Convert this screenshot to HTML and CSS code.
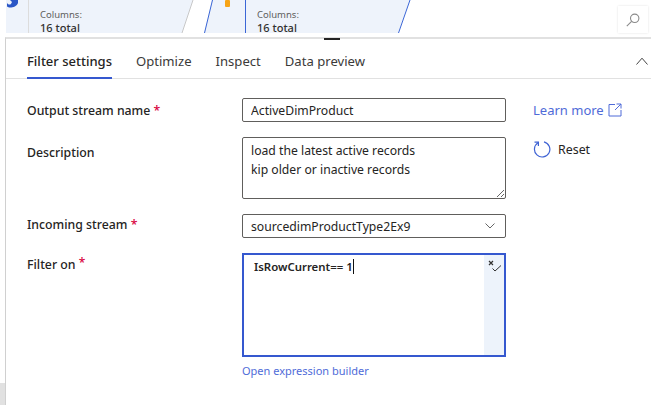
FILE: index.html
```html
<!DOCTYPE html>
<html lang="en">
  <head>
    <meta charset="UTF-8" />
    <meta name="viewport" content="width=device-width, initial-scale=1" />
    <title>Filter settings</title>
    <link rel="stylesheet" href="styles.css">
  </head>
  <body>
    <div class="canvas">
      <svg class="flow" width="651" height="33" viewBox="0 0 651 33">
        <polygon points="6,0 193,0 182,33 6,33" fill="#eef3fb" />
        <line x1="28.5" y1="0" x2="28.5" y2="33" stroke="#dcdcdc" />
        <line x1="193" y1="0" x2="182" y2="33" stroke="#c8c8c8" />
        <polygon points="212,0 410,0 398,33 204,33" fill="#eef3fb" />
        <line x1="212.5" y1="0" x2="204.5" y2="33" stroke="#3b66d6" />
        <line x1="245.5" y1="0" x2="245.5" y2="33" stroke="#3b66d6" />
        <line x1="410" y1="0" x2="398.5" y2="33" stroke="#3b66d6" />
        <path d="M7 3 C9 5.5 11 5 12 2 L10 0 L18 0 L18 3 C17 6.5 12 8 9 7.5 L7 6.5 Z" fill="#2a56c6" />
        <rect x="225" y="0" width="5" height="7" rx="1" fill="#f7a416" />
      </svg>
      <div class="node node-a">
        <span class="node-key">Columns:</span>
        <span class="node-val">16 total</span>
      </div>
      <div class="node node-b">
        <span class="node-key">Columns:</span>
        <span class="node-val">16 total</span>
      </div>
      <button class="search-btn" aria-label="Search">
        <svg width="14" height="14" viewBox="0 0 14 14" fill="none" stroke="#8a8a8a" stroke-width="1.1">
          <circle cx="8.7" cy="5.3" r="4.2" />
          <line x1="5.6" y1="8.4" x2="0.8" y2="13.2" />
        </svg>
      </button>
    </div>

    <main class="panel">
      <span class="grip"></span>
      <nav class="tabs">
        <a class="tab tab-active">Filter settings</a>
        <a class="tab">Optimize</a>
        <a class="tab">Inspect</a>
        <a class="tab">Data preview</a>
        <svg class="collapse" width="12" height="8" viewBox="0 0 12 8" fill="none" stroke="#444" stroke-width="1">
          <path d="M0.5 7.5 L6 1.2 L11.5 7.5" />
        </svg>
      </nav>

      <div class="settings">
        <form class="form">
          <label class="label label-name">Output stream name <span class="req">*</span></label>
          <input class="field field-text" value="ActiveDimProduct" />

          <label class="label label-desc">Description</label>
          <textarea class="field field-area">load the latest active records
kip older or inactive records</textarea>

          <label class="label">Incoming stream <span class="req">*</span></label>
          <div class="field field-select">
            <span>sourcedimProductType2Ex9</span>
            <svg width="10" height="6" viewBox="0 0 10 6" fill="none" stroke="#666" stroke-width="1">
              <path d="M0.5 0.5 L5 5 L9.5 0.5" />
            </svg>
          </div>

          <label class="label label-filter">Filter on <span class="req sup">*</span></label>
          <div class="expr-wrap">
            <div class="expr">
              <div class="expr-code">IsRowCurrent== 1<span class="caret"></span></div>
              <div class="expr-side">
                <svg width="13" height="12" viewBox="0 0 13 12" fill="none" stroke="#333">
                  <path d="M1 1 L5 5 M5 1 L1 5" stroke-width="1.2" />
                  <path d="M4.5 8.5 L7 11 L13 5.5" stroke-width="1" />
                </svg>
              </div>
            </div>
            <a class="expr-link">Open expression builder</a>
          </div>
        </form>

        <aside class="actions">
          <a class="learn">Learn more
            <svg width="14" height="14" viewBox="0 0 14 14" fill="none" stroke="#4f6bd8" stroke-width="1">
              <path d="M7 1.5 H1 V13 H13 V7" />
              <path d="M8.5 1 H13 V5.5 M13 1 L7 7" />
            </svg>
          </a>
          <a class="reset">
            <svg width="18" height="18" viewBox="0 0 18 18" fill="none" stroke="#3f63d4" stroke-width="1.2">
              <path d="M5 2.8 A7.7 7.7 0 1 0 11 1.8" />
              <path d="M1.5 2.2 H5.4 V6" />
            </svg>
            Reset
          </a>
        </aside>
      </div>
    </main>

    <div class="corner"></div>
  </body>
</html>
```

FILE: styles.css
```css
html,
body {
  height: 100%;
}
body {
  font-family: "Noto Sans", "Open Sans", Arial, sans-serif;
  background: #fff;
  color: #252423;
  margin: 0;
  padding: 0;
  overflow: hidden;
  position: relative;
}

/* data flow strip at the top */
.canvas {
  position: relative;
  height: 37px;
}
.flow {
  position: absolute;
  left: 0;
  top: 0;
}
.node {
  position: absolute;
  top: 8px;
  display: flex;
  flex-direction: column;
}
.node-a {
  left: 40px;
}
.node-b {
  left: 257px;
}
.node-key {
  font-size: 9.5px;
  line-height: 13px;
  color: #605e5c;
}
.node-val {
  font-size: 11px;
  line-height: 14px;
  font-weight: 500;
  color: #323130;
}
.search-btn {
  position: absolute;
  left: 618px;
  top: 6px;
  width: 30px;
  height: 27px;
  padding: 0;
  border: 0;
  background: #fff;
  box-shadow: 0 0 2px rgba(0, 0, 0, 0.12);
  display: flex;
  align-items: center;
  justify-content: center;
}

/* bottom panel */
.panel {
  position: relative;
  margin-left: 5px;
  border-left: 1px solid #d0d0d0;
  border-top: 2px solid #e1e1e1;
  height: 366px;
}
.grip {
  position: absolute;
  left: 318px;
  top: -1px;
  width: 16px;
  height: 2px;
  background: #252423;
}
.tabs {
  display: flex;
  align-items: center;
  gap: 24px;
  height: 39px;
  padding-left: 21px;
  border-bottom: 1px solid #e1e1e1;
  font-size: 13.1px;
  position: relative;
}
.tab {
  line-height: 33px;
  padding-top: 6px;
  height: 39px;
  box-sizing: border-box;
  color: #3b3a39;
}
.tab-active {
  font-size: 13px;
  font-weight: 500;
  color: #252423;
  border-bottom: 2px solid #3558cf;
  height: 40px;
}
.collapse {
  position: absolute;
  right: 3px;
  top: 18px;
}
.settings {
  display: flex;
  padding: 19px 0 0 21px;
}
.form {
  display: grid;
  grid-template-columns: 215px 264px;
  row-gap: 15px;
  font-size: 12.3px;
}
.label {
  font-weight: 500;
  line-height: 22px;
  color: #252423;
}
.label-name {
  padding-top: 2px;
}
.label-desc {
  padding-top: 5px;
}
.label-filter {
  line-height: 20px;
}
.req {
  color: #d8003c;
}
.sup {
  font-size: 12px;
  vertical-align: 2px;
}
.field {
  box-sizing: border-box;
  width: 264px;
  border: 1px solid #605e5c;
  border-radius: 2px;
  font-family: inherit;
  font-size: 12.2px;
  color: #252423;
  margin: 0;
  background: #fff;
}
.field-text {
  height: 24px;
  padding: 0 8px;
}
.field-area {
  height: 62px;
  padding: 3px 8px;
  line-height: 19px;
  display: block;
}
.field-select {
  height: 24px;
  padding: 0 10px 0 8px;
  display: flex;
  align-items: center;
  justify-content: space-between;
}
.expr-wrap {
  display: flex;
  flex-direction: column;
  gap: 6px;
}
.expr {
  box-sizing: border-box;
  width: 264px;
  height: 104px;
  border: 2px solid #3558cf;
  display: flex;
}
.expr-code {
  flex: 1;
  padding: 3px 10px;
  font-size: 11.4px;
  line-height: 17px;
  font-weight: 600;
  color: #252423;
}
.caret {
  display: inline-block;
  width: 1px;
  height: 15px;
  background: #111;
  vertical-align: -3px;
}
.expr-side {
  width: 20px;
  background: #edf3fb;
  padding: 4px 0 0 4px;
  box-sizing: border-box;
}
.expr-link {
  font-size: 11px;
  line-height: 15px;
  color: #4f6bd8;
}
.actions {
  display: flex;
  flex-direction: column;
  gap: 15px;
  margin-left: 27px;
  font-size: 13px;
}
.learn {
  display: flex;
  align-items: center;
  gap: 4px;
  height: 24px;
  color: #4f6bd8;
}
.reset {
  display: flex;
  align-items: center;
  gap: 7px;
  height: 24px;
  font-size: 12.4px;
  color: #252423;
}
.corner {
  position: absolute;
  left: 0;
  top: 383px;
  width: 5px;
  height: 22px;
  background: #e1e1e1;
}
```
